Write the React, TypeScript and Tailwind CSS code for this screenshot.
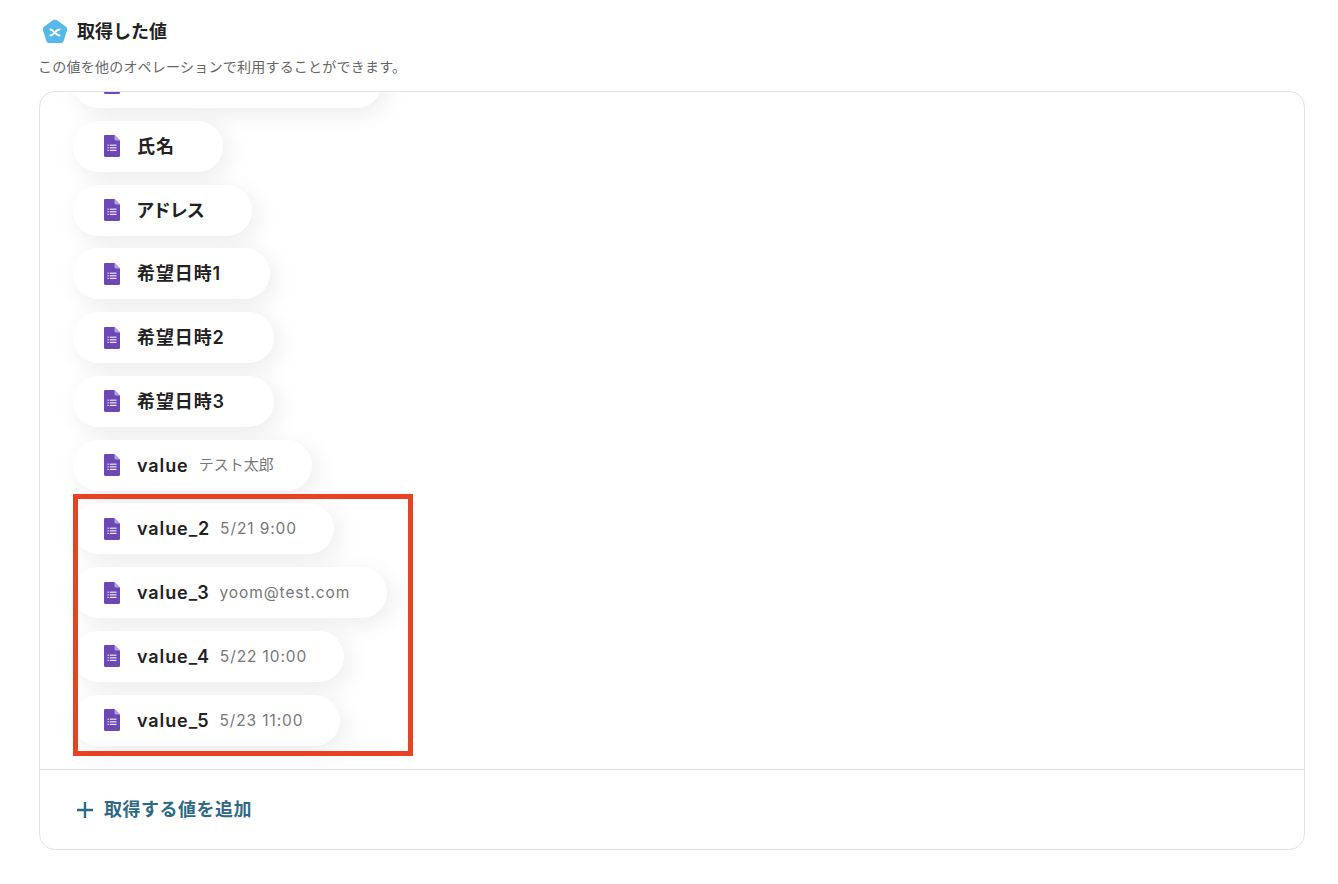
const font = "font-['Inter','Noto_Sans_CJK_JP',sans-serif]";

function FormIcon() {
  return (
    <svg width="16" height="22" viewBox="0 0 16 22" className="shrink-0">
      <path d="M1.2 0H10.5L16 5.5V20.8C16 21.5 15.5 22 14.8 22H1.2C0.5 22 0 21.5 0 20.8V1.2C0 0.5 0.5 0 1.2 0Z" fill="#6C47B6" />
      <path d="M10.5 0L16 5.5H11.7C11 5.5 10.5 5 10.5 4.3V0Z" fill="#B7A3DC" />
      <g fill="#EDE7F6">
        <rect x="3.5" y="9.6" width="1.3" height="1.2" />
        <rect x="3.5" y="12.2" width="1.3" height="1.2" />
        <rect x="3.5" y="14.8" width="1.3" height="1.2" />
        <rect x="5.8" y="9.6" width="6.7" height="1.2" />
        <rect x="5.8" y="12.2" width="6.7" height="1.2" />
        <rect x="5.8" y="14.8" width="6.7" height="1.2" />
      </g>
    </svg>
  );
}

function Pill({ label, value, width, cjkValue, palt }: { label?: string; value?: string; width: string; cjkValue?: boolean; palt?: boolean }) {
  return (
    <div className={`flex h-[51px] shrink-0 items-center rounded-full bg-white pl-[31px] shadow-[5px_6px_24px_rgba(0,0,0,0.08)] ${width}`}>
      <FormIcon />
      {label && (
        <span className={`ml-[17px] whitespace-nowrap text-[18px] font-semibold text-[#222222] ${palt ? "tracking-[0.4px] [font-feature-settings:'palt']" : "tracking-[0.9px]"}`}>
          {label}
        </span>
      )}
      {value && (
        <span className={`ml-[10px] whitespace-nowrap text-[#777777] ${cjkValue ? "text-[15px] tracking-[0px]" : "text-[15.5px] tracking-[0.9px]"}`}>
          {value}
        </span>
      )}
    </div>
  );
}

export default function App() {
  return (
    <div className={`relative h-[884px] w-[1338px] overflow-hidden bg-white pl-[39px] pr-[33px] ${font}`}>
      <div className="flex h-[45px] items-end">
        <div className="flex items-center pl-[3px]">
          <svg width="26" height="26" viewBox="0 0 26 26" className="shrink-0">
            <path d="M11.2 1.1C12.3 .3 13.7 .3 14.8 1.1L24 7.8C25 8.6 25.5 9.9 25.1 11.1L21.6 21.9C21.2 23.2 20.1 24 18.8 24H7.2C5.9 24 4.8 23.2 4.4 21.9L.9 11.1C.5 9.9 1 8.6 2 7.8Z" fill="#55B9E9" />
            <path d="M8.5 10.5C11.5 10.5 14 16.5 17.5 16.5M8.5 16.5C11.5 16.5 14 10.5 17.5 10.5" stroke="#fff" strokeWidth="2" fill="none" strokeLinecap="round" />
          </svg>
          <span className="ml-[9px] text-[18px] font-bold tracking-[0px] text-[#222222]">取得した値</span>
        </div>
      </div>
      <p className="ml-[-1px] mt-[13px] h-[24px] text-[14px] leading-[17px] tracking-[0.23px] text-[#666666]">この値を他のオペレーションで利用することができます。</p>
      <div className="mt-[9px] flex h-[759px] flex-col overflow-hidden rounded-[16px] border border-[#e3e3e3]">
        <div className="min-h-0 flex-1 overflow-hidden pl-[33px]">
          <div className="mt-[-35px] flex flex-col gap-[12.78px]">
            <Pill width="w-[309px]" />
            <Pill label="氏名" width="w-[150px]" />
            <Pill label="アドレス" width="w-[179px]" palt />
            <Pill label="希望日時1" width="w-[197px]" />
            <Pill label="希望日時2" width="w-[201px]" />
            <Pill label="希望日時3" width="w-[201px]" />
            <Pill label="value" value="テスト太郎" width="w-[239px]" cjkValue />
            <Pill label="value_2" value="5/21 9:00" width="w-[261px]" />
            <Pill label="value_3" value="yoom@test.com" width="w-[314px]" />
            <Pill label="value_4" value="5/22 10:00" width="w-[271px]" />
            <Pill label="value_5" value="5/23 11:00" width="w-[267px]" />
          </div>
        </div>
        <div className="flex h-[80px] shrink-0 items-center border-t border-[#e3e3e3] pl-[37px] text-[#2E6A85]">
          <svg width="16" height="16" viewBox="0 0 16 16" className="shrink-0">
            <path d="M8 0V16M0 8H16" stroke="currentColor" strokeWidth="2.4" />
          </svg>
          <span className="ml-[11px] text-[18px] font-bold tracking-[0.5px]">取得する値を追加</span>
        </div>
      </div>
      <div className="absolute left-[73px] top-[494px] h-[262px] w-[340px] border-[5px] border-[#EA4125]" />
    </div>
  );
}
